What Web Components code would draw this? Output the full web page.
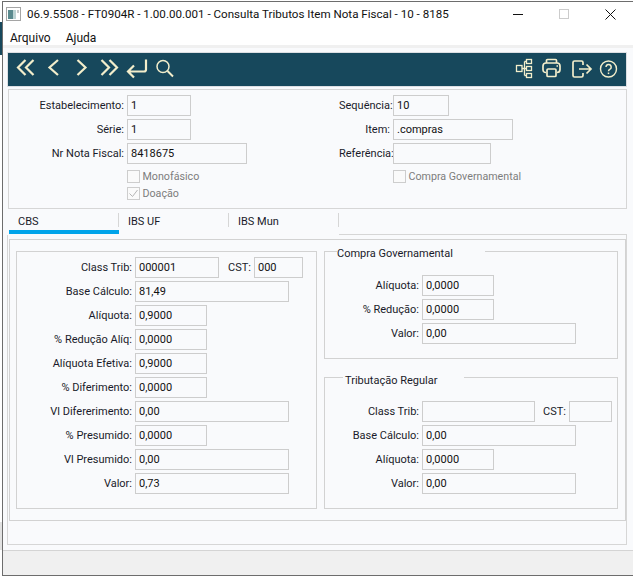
<!DOCTYPE html>
<html><head><meta charset="utf-8">
<style>
html,body{margin:0;padding:0;width:633px;height:576px;overflow:hidden}
body{font:11px Roboto,"Liberation Sans",sans-serif;color:#1a1a1a;
background:linear-gradient(#17485c,#17485c) 0 22px/2px 33px no-repeat,linear-gradient(#e2e2e2,#e2e2e2) 0 522px/2px 28px no-repeat,#fff}
</style></head><body>
<x-window>
  <x-titlebar slot="title">06.9.5508 - FT0904R - 1.00.00.001 - Consulta Tributos Item Nota Fiscal - 10 - 8185</x-titlebar>
  <x-menubar slot="menu"><span>Arquivo</span><span>Ajuda</span></x-menubar>
  <x-toolbar slot="tools"></x-toolbar>
  <x-header-panel slot="head"></x-header-panel>
  <x-tabs slot="tabs"></x-tabs>
  <x-frame slot="frame"></x-frame>
</x-window>
<script>
function def(name,css,html,extra){
  customElements.define(name,class extends HTMLElement{
    constructor(){super();this.attachShadow({mode:'open'}).innerHTML='<style>'+css+'</style>'+(typeof html==='function'?html(this):html);}
    connectedCallback(){ if(extra) extra(this); }
  });
}
def('x-window',`
:host{display:flex;flex-direction:column;width:631px;height:575px;margin:1px 0 0 2px;border-top:1px solid #6d6d6d;border-left:1px solid #6d6d6d;border-bottom:1px solid #6d6d6d;box-sizing:border-box;background:#fff}
.body{flex:1;background:#f9fafc;padding:4px 0 0 4px;display:flex;flex-direction:column;min-height:0;border-top:3px solid #f0f0f0}
.foot{height:25px;flex:none;background:#f0f0f0;border-top:1px solid #d4d4d4;box-sizing:border-box}
`,`<slot name="title"></slot><slot name="menu"></slot><div class="body"><slot name="tools"></slot><slot name="head"></slot><slot name="tabs"></slot><slot name="frame"></slot></div><div class="foot"></div>`);
def('x-titlebar',`
:host{display:flex;align-items:center;height:25px;box-sizing:border-box;padding:0 0 1px 3px;font-size:11.6px;color:#111}
svg{margin-right:6px;flex:none}
.t{flex:1;white-space:nowrap}
.c{display:flex;width:138px;flex:none;height:100%;align-items:center}
.c svg{margin:0}
.c span{width:46px;display:flex;justify-content:center}
`,`<svg width="15" height="14" viewBox="0 0 15 14"><rect x=".5" y=".5" width="14" height="13" fill="#fff" stroke="#a5a5a5"/><rect x="2" y="3" width="5" height="9" fill="#5a8a8e"/><rect x="7" y="3" width="3" height="9" fill="#bcd3d3"/><rect x="11" y="3" width="2" height="3" fill="#c9c9c9"/></svg><span class="t"><slot></slot></span>
<span class="c"><span><svg width="10" height="10"><path d="M0 5.5H10" stroke="#111"/></svg></span><span><svg width="10" height="10"><rect x=".5" y=".5" width="9" height="9" fill="none" stroke="#ccc"/></svg></span><span><svg width="11" height="11"><path d="M.5.5l10 10M10.500.5l-10 10" stroke="#111" fill="none"/></svg></span></span>`);
def('x-menubar',`
:host{display:flex;gap:15px;height:18px;box-sizing:border-box;padding:3px 0 0 7px;align-items:center;font-size:12px;color:#111}
::slotted(span){display:block}
`,`<slot></slot>`);
const ic=(w,ml,d)=>`<svg style="margin-left:${ml}px" width="${w}" height="24" viewBox="0 0 ${w} 24" fill="none" stroke="#f3eecb" stroke-width="2.2">${d}</svg>`;
def('x-toolbar',`
:host{display:flex;align-items:flex-start;height:35px;width:620px;box-sizing:border-box;background:#17485c;border:1px solid #dcdfe3;padding:4px 0 0 7px}
svg{display:block;flex:none}
.sp{flex:1}
`,[
 ic(20,0,'<path d="M10.500 3L3 10.500 10.500 18M18.500 3L11 10.500 18.500 18"/>'),
 ic(13,12,'<path d="M11 3L2.500 10.500 11 18"/>'),
 ic(13,15,'<path d="M2.500 3L10.500 10.500 2.500 18"/>'),
 ic(20,11,'<path d="M2.500 3L10 10.500 2.500 18M10.500 3L18 10.500 10.500 18"/>'),
 ic(24,6,'<path d="M21 2.500V12.500a2 2 0 0 1-2 2H3M9 8.500L3 14.500 9 20.500"/>'),
 ic(20,6,'<circle cx="8" cy="9.500" r="6" stroke-width="1.500"/><path d="M12.500 14L18 19.500" stroke-width="1.900"/>'),
 '<span class="sp"></span>',
 ic(18,0,'<g stroke-width="1.300"><rect x="1.500" y="8.500" width="5.500" height="6"/><rect x="11.500" y="2.500" width="5" height="4"/><rect x="11.500" y="9.500" width="5" height="4"/><rect x="11.500" y="16.500" width="5" height="4"/><path d="M7 11.500H11.500M9.500 4.500V18.500M9.500 4.500H11.500M9.500 18.500H11.500"/></g>'),
 ic(20,9,'<g stroke-width="1.700"><path d="M4.500 6V3.500a1 1 0 0 1 1-1h8a1 1 0 0 1 1 1V6"/><path d="M4 15.500C2 15.500 1 14.500 1 12.500V9C1 7 2 6 4 6H15C17 6 18 7 18 9V12.500C18 14.500 17 15.500 15 15.500"/><rect x="5" y="12" width="9" height="7.500" rx="1"/><path d="M14.500 9h1.500"/></g>'),
 ic(22,9,'<g stroke-width="1.700"><path d="M12 8V5.500A1.500 1.500 0 0 0 10.500 4H3.500A1.500 1.500 0 0 0 2 5.500V18.500A1.500 1.500 0 0 0 3.500 20H10.500A1.500 1.500 0 0 0 12 18.500V16"/><path d="M8 12H19.500M15.500 7.500L20 12 15.500 16.500"/></g>'),
 ic(20,6,'<circle cx="9.500" cy="12" r="8" stroke-width="1.400"/><path d="M7 10a2.600 2.600 0 1 1 4 2.200c-1 .6-1.500 1-1.500 2.100" stroke-width="1.500"/><path d="M9.500 15.500v1.600" stroke-width="1.500"/>'),
 '<span style="width:7px;flex:none"></span>'
].join(''));
def('x-field',`
:host{display:grid;grid-template-columns:var(--lw,100px) auto;column-gap:3px;align-items:center;height:21px;width:max-content;color:#1a1a2a}
label{text-align:right;white-space:nowrap}
.i{box-sizing:border-box;height:21px;width:var(--w,64px);background:#f9fafc;border:1px solid #cdcdcd;padding:1px 0 0 3px;line-height:18px;white-space:nowrap;overflow:hidden;color:#111}
`,(h)=>`<label>${h.getAttribute('label')||''}</label><div class="i">${h.getAttribute('value')||''}</div>`,
(h)=>{const w=h.getAttribute('w');if(w)h.style.setProperty('--w',w+'px');const l=h.getAttribute('lw');if(l)h.style.setProperty('--lw',l+'px');});
def('x-check',`
:host{display:flex;align-items:center;gap:2.500px;height:17px;color:#7d7d7d;font-size:10.700px}
.b{box-sizing:border-box;width:13px;height:13px;border:1px solid #cdcdcd;background:#fafafa;flex:none;display:block}
svg{display:block}
`,(h)=>`<span class="b">${h.hasAttribute('checked')?'<svg width="11" height="11"><path d="M1.500 5.500l3 3 5-6.500" fill="none" stroke="#b5b5b5"/></svg>':''}</span><span>${h.getAttribute('label')}</span>`);
def('x-header-panel',`
:host{display:grid;grid-template-columns:330px 1fr;width:619px;height:120px;box-sizing:border-box;margin:2px 0 0 1px;border:1px solid #d6d6d6;padding:5px 0 0 0}
.c{display:flex;flex-direction:column;gap:3px;--lw:115px}
.c.r{--lw:51px}
.ck{display:flex;flex-direction:column;margin:1px 0 0 118px}
.r .ck{margin-left:54px}
`,`<div class="c">
<x-field label="Estabelecimento:" value="1" w="64"></x-field>
<x-field label="Série:" value="1" w="64"></x-field>
<x-field label="Nr Nota Fiscal:" value="8418675" w="120"></x-field>
<div class="ck"><x-check label="Monofásico"></x-check><x-check label="Doação" checked></x-check></div>
</div><div class="c r">
<x-field label="Sequência:" value="10" w="56"></x-field>
<x-field label="Item:" value=".compras" w="120"></x-field>
<x-field label="Referência:" value="" w="98"></x-field>
<div class="ck"><x-check label="Compra Governamental"></x-check></div>
</div>`);
def('x-tabs',`
:host{display:flex;height:22px;width:620px;margin-top:4px;box-sizing:border-box}
.t{width:110px;flex:none;box-sizing:border-box;padding:0 0 0 9px;height:21px;line-height:17px;position:relative;color:#1a1a2a}
.t.a{border-bottom:4px solid #00a4ea;margin-left:2px}
.t::after{content:"";position:absolute;right:0;top:0;height:14px;width:1px;background:#d6d6d6}
.rest{flex:1;align-self:flex-start;margin-top:21px;border-top:1px solid #d6d6d6;height:0}
`,`<div class="t a">CBS</div><div class="t">IBS UF</div><div class="t">IBS Mun</div><div class="rest"></div>`);
def('x-group',`
:host{display:block;box-sizing:border-box;position:relative;border:1px solid #d2d2d2}
.lg{position:absolute;left:var(--lx,8px);top:var(--ly,-7px);width:var(--lgw,auto);box-sizing:border-box;background:#f9fafc;height:13px;line-height:18px;white-space:nowrap;color:#1a1a2a;padding-left:var(--lp,0)}
`,(h)=>`${h.getAttribute('legend')?`<div class="lg">${h.getAttribute('legend')}</div>`:''}<slot></slot>`,
(h)=>{for(const[a,v,u]of[['lx','--lx','px'],['lgw','--lgw','px'],['ly','--ly','px'],['lp','--lp','px']]){const l=h.getAttribute(a);if(l)h.style.setProperty(v,l+u);}});
def('x-frame',`
:host{display:block;width:620px;height:310px;box-sizing:border-box;border:1px solid #d6d6d6;border-top:none;padding:4px 0 0 1px}
.inner{height:282px;box-sizing:border-box;border:1px solid #d2d2d2;padding:11px 0 0 6px;display:grid;grid-template-columns:301px 294px;column-gap:7px;align-items:start}
.stack{display:flex;flex-direction:column;gap:3px;padding-top:5px;--lw:115px}
.row{display:flex;align-items:center}
.m6{margin-left:6px}.m5{margin-left:5px}
x-group.l{height:258px}
.rg{display:flex;flex-direction:column;gap:18px}
.s2{display:flex;flex-direction:column;gap:3px;--lw:94px;padding-top:23px}
`,`
<div class="inner">
<x-group class="l"><div class="stack">
<div class="row"><x-field label="Class Trib:" value="000001" w="84"></x-field><x-field class="m6" label="CST:" value="000" w="49" lw="26"></x-field></div>
<x-field label="Base Cálculo:" value="81,49" w="154"></x-field>
<x-field label="Alíquota:" value="0,9000" w="72"></x-field>
<x-field label="% Redução Alíq:" value="0,0000" w="72"></x-field>
<x-field label="Alíquota Efetiva:" value="0,9000" w="72"></x-field>
<x-field label="% Diferimento:" value="0,0000" w="72"></x-field>
<x-field label="Vl Difererimento:" value="0,00" w="154"></x-field>
<x-field label="% Presumido:" value="0,0000" w="72"></x-field>
<x-field label="Vl Presumido:" value="0,00" w="154"></x-field>
<x-field label="Valor:" value="0,73" w="154"></x-field>
</div></x-group>
<div class="rg">
<x-group legend="Compra Governamental" lx="12" lgw="148" style="height:108px"><div class="s2">
<x-field label="Alíquota:" value="0,0000" w="72"></x-field>
<x-field label="% Redução:" value="0,0000" w="72"></x-field>
<x-field label="Valor:" value="0,00" w="154"></x-field>
</div></x-group>
<x-group legend="Tributação Regular" lx="18" lp="2" lgw="121" ly="-6" style="height:132px"><div class="s2">
<div class="row"><x-field label="Class Trib:" value="" w="113"></x-field><x-field class="m5" label="CST:" value="" w="43" lw="26"></x-field></div>
<x-field label="Base Cálculo:" value="0,00" w="154"></x-field>
<x-field label="Alíquota:" value="0,0000" w="72"></x-field>
<x-field label="Valor:" value="0,00" w="154"></x-field>
</div></x-group>
</div>
</div>`);
</script>
</body></html>
